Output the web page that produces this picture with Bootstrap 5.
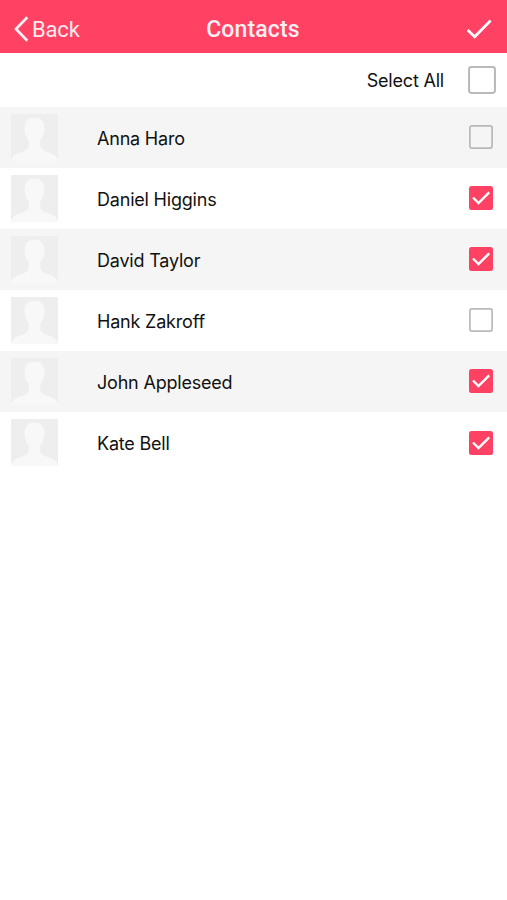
<!DOCTYPE html>
<html lang="en">
<head>
<meta charset="utf-8">
<meta name="viewport" content="width=device-width, initial-scale=1">
<title>Contacts</title>
<link href="https://cdn.jsdelivr.net/npm/bootstrap@5.3.0/dist/css/bootstrap.min.css" rel="stylesheet">
<style>
body{font-family:Inter,"Liberation Sans",sans-serif;color:#111;background:#fff;min-height:100vh}
.topbar{height:53px;background:#ff4263;color:#fff;display:grid;grid-template-columns:1fr auto 1fr;font-family:Roboto,Inter,sans-serif;font-size:22px;line-height:26px;padding:5px 15px 0 14px}
.back-link{color:#ffe9ee;letter-spacing:-.15px;gap:3px}
.back-link span{padding-top:1px}
.topbar h1{font-size:23px;line-height:26px;font-weight:500;letter-spacing:.15px;color:#ffeef2;padding-top:2px}
.select-all{height:53.5px;padding-right:11px;gap:24px}
.label-text{font-size:18px;line-height:24px;letter-spacing:-.2px;padding-top:3px;font-variant-ligatures:none}
.contact{height:61.1px;padding:0 14.5px 0 11px}
.contact:nth-child(odd){background:#f5f5f5}
.avatar{width:47px;height:47px;margin-right:39px}
svg{display:block;flex:none}
</style>
<script src="https://cdn.jsdelivr.net/npm/bootstrap@5.3.0/dist/js/bootstrap.bundle.min.js"></script>
</head>
<body>
<svg class="d-none" aria-hidden="true">
<symbol id="person" viewBox="0 0 47 47"><path fill="#eee" d="M0 0H47V47H0Z"/><path fill="#f8f8f8" d="M23.500 3.500c-6.500 0-10 4.200-10 10.500 0 5.200 1.500 9.500 4.300 12.300v4.200c0 4-2.300 5.800-6.800 7.300C5.500 39.600 1.500 41.500 0 46v1h47v-1c-1.500-4.500-5.500-6.400-11-8.200-4.500-1.500-6.800-3.300-6.800-7.300v-4.200c2.800-2.800 4.300-7.100 4.300-12.300 0-6.300-3.500-10.500-10-10.500Z"/></symbol>
<symbol id="box-off" viewBox="0 0 24 24"><rect x=".9" y=".9" width="22.200" height="22.200" rx="2" fill="none" stroke="#b9b9b9" stroke-width="1.700"/></symbol>
<symbol id="box-on" viewBox="0 0 24 24"><rect width="24" height="24" rx="2.500" fill="#ff4263"/><path d="M4 11.500L9.500 17L20.200 6.300" fill="none" stroke="#fff" stroke-width="2.400"/></symbol>
</svg>
<header class="topbar align-items-center">
<a href="#" class="back-link d-flex align-items-center text-decoration-none"><svg width="15" height="26" viewBox="0 0 15 26"><path d="M13.300 1.200L2 13L13.300 24.800" fill="none" stroke="#ffeef2" stroke-width="2.700"/></svg><span>Back</span></a>
<h1 class="m-0">Contacts</h1>
<a href="#" class="ms-auto" aria-label="Done"><svg width="26" height="20" viewBox="0 0 26 20"><path d="M1.700 11L8.700 17.800L24.600 1.500" fill="none" stroke="#fff" stroke-width="2.700"/></svg></a>
</header>
<main>
<div class="select-all d-flex align-items-center justify-content-end"><span class="label-text">Select All</span><svg width="28" height="28"><use href="#box-off"/></svg></div>
<ul class="list-unstyled m-0">
<li class="contact d-flex align-items-center"><svg class="avatar"><use href="#person"/></svg><span class="label-text">Anna Haro</span><svg class="ms-auto" width="24" height="24"><use href="#box-off"/></svg></li>
<li class="contact d-flex align-items-center"><svg class="avatar"><use href="#person"/></svg><span class="label-text">Daniel Higgins</span><svg class="ms-auto" width="24" height="24"><use href="#box-on"/></svg></li>
<li class="contact d-flex align-items-center"><svg class="avatar"><use href="#person"/></svg><span class="label-text">David Taylor</span><svg class="ms-auto" width="24" height="24"><use href="#box-on"/></svg></li>
<li class="contact d-flex align-items-center"><svg class="avatar"><use href="#person"/></svg><span class="label-text">Hank Zakroff</span><svg class="ms-auto" width="24" height="24"><use href="#box-off"/></svg></li>
<li class="contact d-flex align-items-center"><svg class="avatar"><use href="#person"/></svg><span class="label-text">John Appleseed</span><svg class="ms-auto" width="24" height="24"><use href="#box-on"/></svg></li>
<li class="contact d-flex align-items-center"><svg class="avatar"><use href="#person"/></svg><span class="label-text">Kate Bell</span><svg class="ms-auto" width="24" height="24"><use href="#box-on"/></svg></li>
</ul>
</main>
</body>
</html>
